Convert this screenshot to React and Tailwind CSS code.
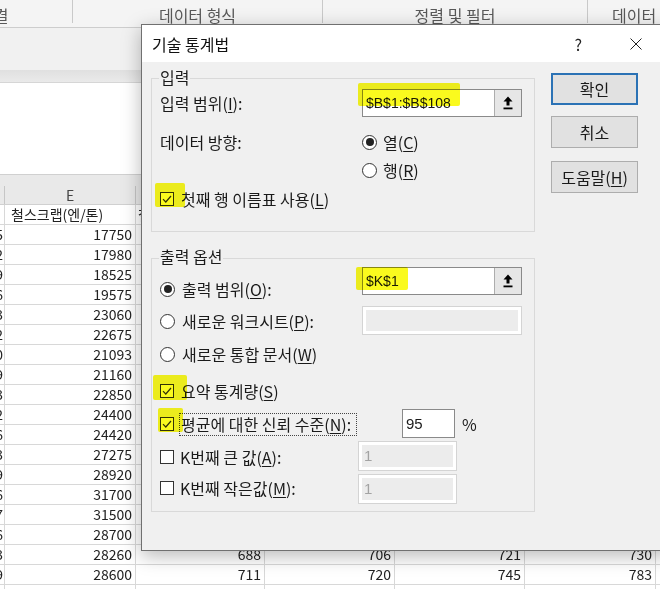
import React from "react";

const D_VALS = ["1745","2462","1489","1536","2413","2552","2360","2259","2673","2742","3306","3133","3309","3156","3217","3336","3583","3459"];
const E_VALS = [17750,17980,18525,19575,23060,22675,21093,21160,22850,24400,24420,27275,28920,31700,31500,28700,28260,28600];
const BOTTOM = { 16: [688, 706, 721, 730], 17: [711, 720, 745, 783] };

function Acc({ children }) {
  return <span className="underline underline-offset-[2px] decoration-1">{children}</span>;
}

function Checkbox() {
  return (
    <span className="w-[14px] h-[14px] shrink-0 border border-[#333] bg-white flex items-center justify-center">
      <svg width="12" height="12" viewBox="0 0 12 12">
        <polyline points="2,6.2 4.8,9 10,3" fill="none" stroke="#333" strokeWidth="1.2" />
      </svg>
    </span>
  );
}

function EmptyBox() {
  return <span className="w-[14px] h-[14px] shrink-0 border border-[#333] bg-white" />;
}

function Radio({ on }) {
  return (
    <span className="w-[15px] h-[15px] shrink-0 rounded-full border border-[#333] bg-white flex items-center justify-center">
      {on && <span className="w-[8px] h-[8px] rounded-full bg-[#222]" />}
    </span>
  );
}

function RangeInput({ value }) {
  return (
    <div className="w-[160px] h-[28px] flex border border-[#8a8a8a] bg-white">
      <div className="flex-1 flex items-center pl-[3px] font-['Liberation_Sans',sans-serif] text-[14px]">{value}</div>
      <div className="w-[27px] h-full border-l border-[#adadad] bg-[#e6e6e6] flex items-center justify-center">
        <svg width="10" height="14" viewBox="0 0 10 14">
          <path d="M5 0.5 L9.5 5.5 H6.5 V9.5 H3.5 V5.5 H0.5 Z" fill="#000" />
          <rect x="0.5" y="11.5" width="9" height="1.8" fill="#000" />
        </svg>
      </div>
    </div>
  );
}

function DisabledInput({ w, h, text }) {
  return (
    <div className={`${w} ${h} border border-[#d4d4d4] bg-white p-[3px]`}>
      <div className="h-full bg-[#ececec] flex items-center pl-[2px] text-[#a3a3a3] font-['Liberation_Sans',sans-serif] text-[15px]">{text}</div>
    </div>
  );
}

function Cell({ w, children, align = "right", className = "" }) {
  return (
    <div
      className={`${w} shrink-0 h-full border-r border-[#d8d8d8] overflow-hidden whitespace-nowrap flex ${
        align === "right" ? "justify-end pr-[3px]" : "justify-start pl-[6px]"
      } ${className}`}
    >
      {children}
    </div>
  );
}

function SheetRow({ d, e, f, g, h, i, eLeft }) {
  return (
    <div className="flex h-[20px] border-b border-[#d8d8d8] leading-[19px] text-[14px] text-[#222]">
      <div className="w-[5px] shrink-0 h-full border-r border-[#d8d8d8] overflow-hidden whitespace-nowrap flex justify-end pr-[1px]">
        {d}
      </div>
      {eLeft ? <Cell w="w-[131px]" align="left">{e}</Cell> : <Cell w="w-[131px]">{e}</Cell>}
      {eLeft ? <Cell w="w-[129px]" align="left" className="!pl-[2px]">{f}</Cell> : <Cell w="w-[129px]">{f}</Cell>}
      <Cell w="w-[130px]">{g}</Cell>
      <Cell w="w-[130px]">{h}</Cell>
      <Cell w="w-[131px]">{i}</Cell>
      <div className="flex-1" />
    </div>
  );
}

export default function App() {
  return (
    <div className="relative w-[660px] h-[589px] overflow-hidden bg-white font-['Noto_Sans_CJK_KR','Noto_Sans',sans-serif] text-[#1a1a1a]">
      {/* Ribbon group labels */}
      <div className="flex h-[28px] bg-[#f4f4f4] border-b border-[#cdcdcd] text-[16px] text-[#595959] leading-[20px]">
        <div className="w-[72px] overflow-hidden pt-[5px] whitespace-nowrap">
          <span className="inline-block ml-[-21px]">연결</span>
        </div>
        <div className="w-px h-[23px] bg-[#c9c9c9]" />
        <div className="w-[249px] text-center pt-[5px]">데이터 형식</div>
        <div className="w-px h-[23px] bg-[#c9c9c9]" />
        <div className="w-[264px] text-center pt-[5px]">정렬 및 필터</div>
        <div className="w-px h-[23px] bg-[#c9c9c9]" />
        <div className="flex-1 pl-[24px] pt-[5px] whitespace-nowrap overflow-hidden">데이터 도구</div>
      </div>
      <div className="h-[42px] bg-[#f1f1f1]" />
      <div className="h-[13px] bg-linear-to-b from-[#e0e0e0] to-[#eaeaea] border-b border-[#d6d6d6]" />
      <div className="h-[91px] bg-white" />

      {/* Column headers */}
      <div className="h-[31px] bg-[#e9e9e9] border-t border-[#d0d0d0] border-b border-[#c6c6c6] flex items-end text-[14px] text-[#444]">
        <div className="w-[5px] h-[18px] border-r border-[#c6c6c6]" />
        <div className="w-[131px] h-[18px] border-r border-[#c6c6c6] flex items-center justify-center leading-none">E</div>
        <div className="w-[129px] h-[18px] border-r border-[#c6c6c6]" />
        <div className="flex-1" />
      </div>

      {/* Rows */}
      <SheetRow eLeft d="" e="철스크랩(엔/톤)" f="철근(원/톤)" />
      {E_VALS.map((v, idx) => {
        const b = BOTTOM[idx] || [];
        return <SheetRow key={idx} d={D_VALS[idx]} e={v} f={b[0]} g={b[1]} h={b[2]} i={b[3]} />;
      })}
      <SheetRow d="2911" e="28950" f="720" g="731" h="760" i="790" />

      {/* Dialog */}
      <div className="absolute left-[141px] top-[24px] w-[530px] h-[527px] border border-[#707070] bg-[#f0f0f0] shadow-[0_5px_18px_rgba(0,0,0,0.28)] text-[16px] leading-[20px]">
        <div className="h-[37px] bg-white flex items-center">
          <span className="ml-[10px] text-[16px] text-[#111]">기술 통계법</span>
          <span className="flex-1" />
          <span className="text-[16px] text-[#222]">?</span>
          <svg className="ml-[48px] mr-[28px]" width="12" height="12" viewBox="0 0 12 12">
            <path d="M0.5 0.5 L11.5 11.5 M11.5 0.5 L0.5 11.5" stroke="#222" strokeWidth="1" />
          </svg>
        </div>

        <div className="flex items-start pl-[9px] pt-[11px]">
          {/* Left column */}
          <div className="w-[384px] pt-[5px]">
            {/* Group: 입력 */}
            <div className="relative h-[154px] border border-[#d9d9d9]">
              <span className="absolute left-[7px] top-[-12px] px-[1px] bg-[#f0f0f0] leading-[20px]">입력</span>
              <div className="pt-[10px]">
                <div className="flex items-center h-[28px]">
                  <div className="w-[210px] pl-[8px]">
                    입력 범위(<Acc>I</Acc>):
                  </div>
                  <RangeInput value="$B$1:$B$108" />
                </div>
                <div className="flex items-center h-[28px] mt-[11px]">
                  <div className="w-[210px] pl-[8px]">데이터 방향:</div>
                  <div className="flex items-center gap-[6px]">
                    <Radio on />
                    <span>
                      열(<Acc>C</Acc>)
                    </span>
                  </div>
                </div>
                <div className="flex items-center h-[28px]">
                  <div className="w-[210px]" />
                  <div className="flex items-center gap-[6px]">
                    <Radio />
                    <span>
                      행(<Acc>R</Acc>)
                    </span>
                  </div>
                </div>
                <div className="flex items-center h-[28px] mt-[1px] pl-[8px] gap-[7px]">
                  <Checkbox />
                  <span>
                    첫째 행 이름표 사용(<Acc>L</Acc>)
                  </span>
                </div>
              </div>
            </div>

            {/* Group: 출력 옵션 */}
            <div className="relative h-[254px] mt-[26px] border border-[#d9d9d9]">
              <span className="absolute left-[7px] top-[-13px] px-[1px] bg-[#f0f0f0] leading-[20px]">출력 옵션</span>
              <div className="pt-[8px]">
                <div className="flex items-start">
                  <div className="w-[210px] pl-[8px] mt-[8px] h-[28px] flex items-center gap-[7px]">
                    <Radio on />
                    <span>
                      출력 범위(<Acc>O</Acc>):
                    </span>
                  </div>
                  <RangeInput value="$K$1" />
                </div>
                <div className="flex items-start mt-[3px]">
                  <div className="w-[210px] pl-[8px] mt-[1px] h-[28px] flex items-center gap-[7px]">
                    <Radio />
                    <span>
                      새로운 워크시트(<Acc>P</Acc>):
                    </span>
                  </div>
                  <DisabledInput w="w-[160px]" h="h-[29px]" text="" />
                </div>
                <div className="flex items-center mt-[5px] h-[28px] pl-[8px] gap-[7px]">
                  <Radio />
                  <span>
                    새로운 통합 문서(<Acc>W</Acc>)
                  </span>
                </div>
                <div className="flex items-center mt-[9px] h-[28px] pl-[8px] gap-[7px]">
                  <Checkbox />
                  <span>
                    요약 통계량(<Acc>S</Acc>)
                  </span>
                </div>
                <div className="flex items-start mt-[4px]">
                  <div className="pl-[8px] mt-[1px] h-[28px] flex items-center">
                    <Checkbox />
                    <span className="ml-[5px] w-[178px] h-[23px] border border-dotted border-[#444] flex items-center pl-[1px] whitespace-nowrap">
                      평균에 대한 신뢰 수준(<Acc>N</Acc>):
                    </span>
                  </div>
                  <div className="ml-[45px] w-[53px] h-[29px] border border-[#8a8a8a] bg-white flex items-center pl-[3px] font-['Liberation_Sans',sans-serif] text-[15px]">95</div>
                  <div className="ml-[7px] h-[29px] flex items-center">%</div>
                </div>
                <div className="flex items-start mt-[3px]">
                  <div className="w-[206px] pl-[8px] mt-[2px] h-[28px] flex items-center gap-[6px]">
                    <EmptyBox />
                    <span>
                      K번째 큰 값(<Acc>A</Acc>):
                    </span>
                  </div>
                  <DisabledInput w="w-[99px]" h="h-[30px]" text="1" />
                </div>
                <div className="flex items-start mt-[3px]">
                  <div className="w-[206px] pl-[8px] h-[28px] flex items-center gap-[6px]">
                    <EmptyBox />
                    <span>
                      K번째 작은값(<Acc>M</Acc>):
                    </span>
                  </div>
                  <DisabledInput w="w-[99px]" h="h-[30px]" text="1" />
                </div>
              </div>
            </div>
          </div>

          {/* Buttons */}
          <div className="ml-[16px] w-[87px] flex flex-col">
            <div className="h-[32px] border-2 border-[#2b72b5] bg-[#e1e1e1] flex items-center justify-center">확인</div>
            <div className="h-[32px] mt-[11px] border border-[#adadad] bg-[#e1e1e1] flex items-center justify-center">취소</div>
            <div className="h-[32px] mt-[13px] border border-[#adadad] bg-[#e1e1e1] flex items-center justify-center">
              도움말(<Acc>H</Acc>)
            </div>
          </div>
        </div>
      </div>

      {/* Yellow marker highlights */}
      <div className="absolute left-[358px] top-[83px] w-[102px] h-[23px] bg-[#fafa1e] mix-blend-multiply rounded-[2px]" />
      <div className="absolute left-[155px] top-[183px] w-[30px] h-[24px] bg-[#fafa1e] mix-blend-multiply rounded-[2px]" />
      <div className="absolute left-[356px] top-[267px] w-[52px] h-[23px] bg-[#fafa1e] mix-blend-multiply rounded-[2px]" />
      <div className="absolute left-[153px] top-[375px] w-[34px] h-[25px] bg-[#fafa1e] mix-blend-multiply rounded-[2px]" />
      <div className="absolute left-[158px] top-[408px] w-[25px] h-[24px] bg-[#fafa1e] mix-blend-multiply rounded-[2px]" />
    </div>
  );
}
